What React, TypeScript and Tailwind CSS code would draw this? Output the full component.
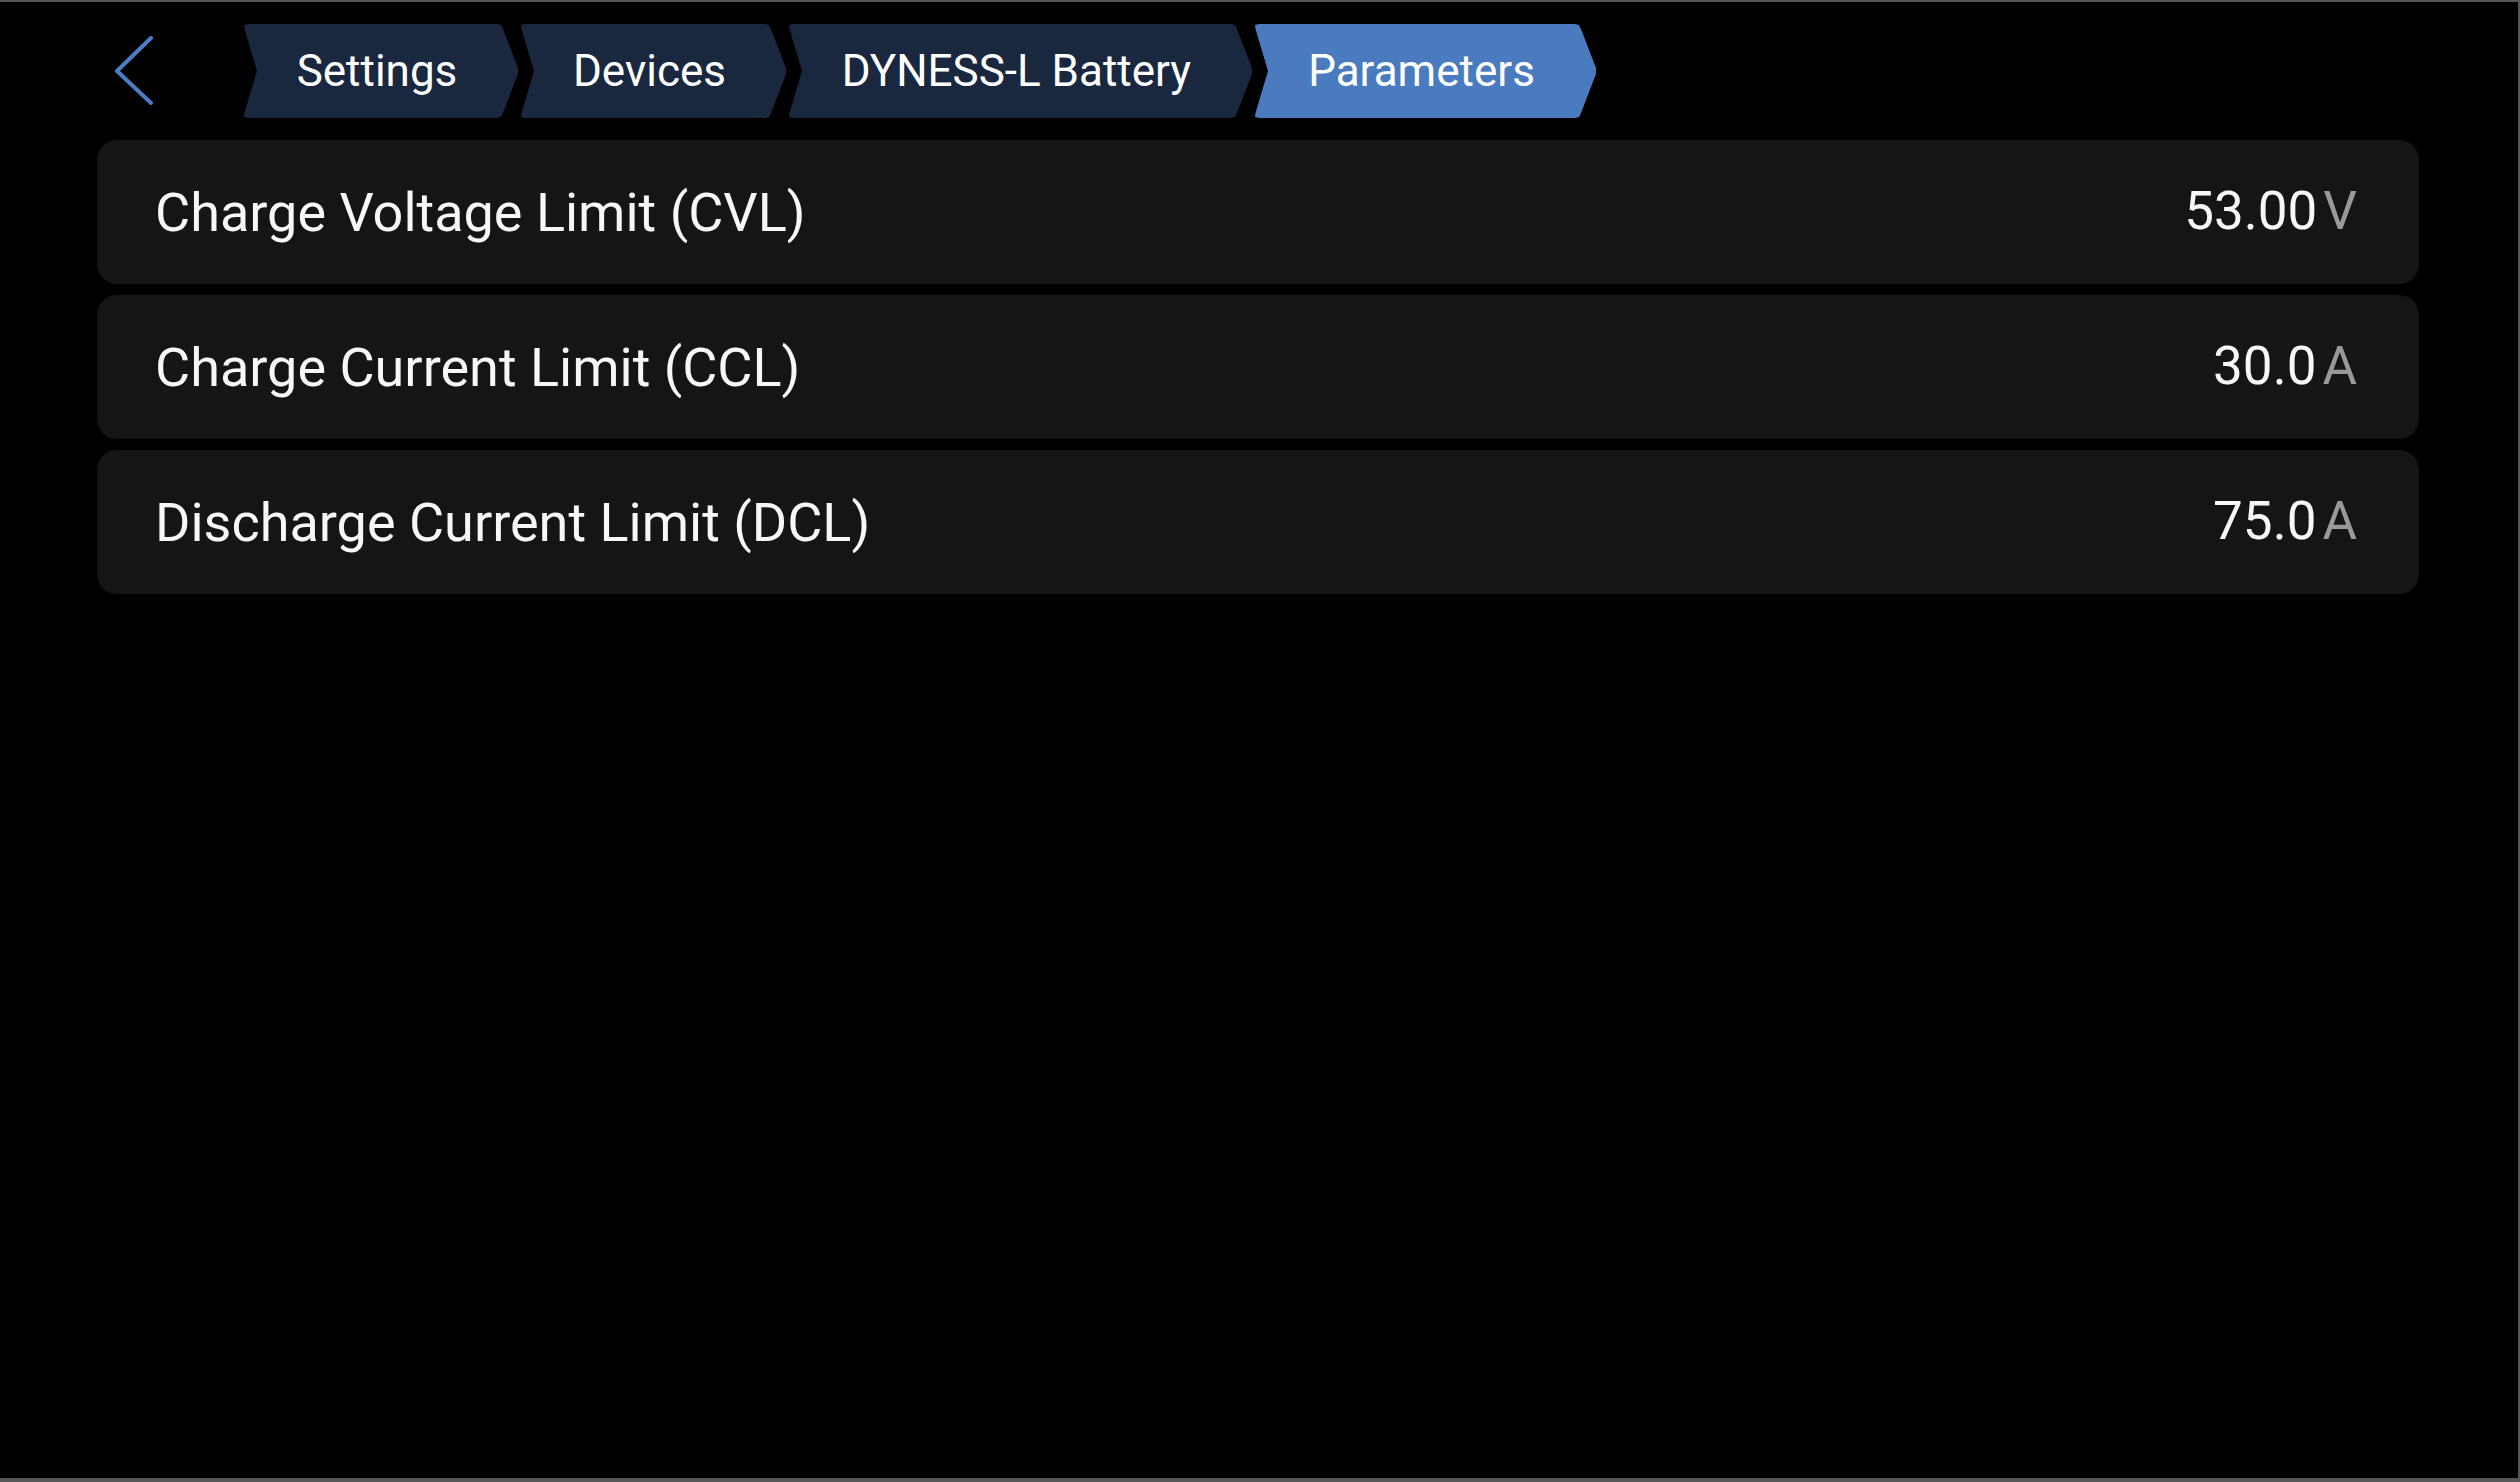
import React from "react";

const CRUMB_SHAPE =
  "[clip-path:polygon(5px_0,calc(100%-22px)_0,calc(100%-18px)_1px,calc(100%-16px)_5px,calc(100%-1px)_44px,calc(100%-1px)_50px,calc(100%-16px)_89px,calc(100%-18px)_93px,calc(100%-22px)_94px,5px_94px,1px_93px,1.5px_89px,14px_47px,1.5px_5px,1px_1px)]";

const crumbs = [
  { label: "Settings", width: "w-[276px]", active: false },
  { label: "Devices", width: "w-[267px]", active: false },
  { label: "DYNESS-L Battery", width: "w-[465px]", active: false },
  { label: "Parameters", width: "w-[343px]", active: true },
];

const params = [
  { name: "Charge Voltage Limit (CVL)", value: "53.00", unit: "V" },
  { name: "Charge Current Limit (CCL)", value: "30.0", unit: "A" },
  { name: "Discharge Current Limit (DCL)", value: "75.0", unit: "A" },
];

function BackChevron() {
  return (
    <svg width="40" height="70" viewBox="0 0 40 70" fill="none" className="ml-[18px]">
      <polyline
        points="37,2 3,35 37,67"
        stroke="#4b7cc4"
        strokeWidth="4"
        strokeLinecap="round"
        strokeLinejoin="round"
      />
    </svg>
  );
}

export default function App() {
  return (
    <div className="w-[2520px] h-[1482px] bg-black border-t-2 border-r-2 border-b-4 border-[#575757] overflow-hidden font-['Roboto','Liberation_Sans',sans-serif]">
      <header className="flex items-center pt-[22px] pl-[96px]">
        <button className="flex h-[94px] w-[147px] items-center">
          <BackChevron />
        </button>
        <nav className="flex items-center gap-[1px]">
          {crumbs.map((c) => (
            <div
              key={c.label}
              className={`${c.width} ${CRUMB_SHAPE} flex h-[94px] items-center justify-center pl-[6px] pr-[14px] text-[44px] text-white ${
                c.active ? "bg-[#4a7bbf]" : "bg-[#19273f]"
              }`}
            >
              {c.label}
            </div>
          ))}
        </nav>
      </header>

      <main className="mt-[22px] ml-[97px] mr-[99px] flex flex-col gap-[11px]">
        {params.map((p) => (
          <div
            key={p.name}
            className="flex h-[144px] items-center justify-between rounded-[20px] bg-[#151515] pl-[58px] pr-[62px]"
          >
            <span className="text-[54px] text-[#f7f7f7]">{p.name}</span>
            <span className="flex items-baseline text-[53px]">
              <span className="text-[#f7f7f7]">{p.value}</span>
              <span className="ml-[6px] text-[#999999]">{p.unit}</span>
            </span>
          </div>
        ))}
      </main>
    </div>
  );
}
